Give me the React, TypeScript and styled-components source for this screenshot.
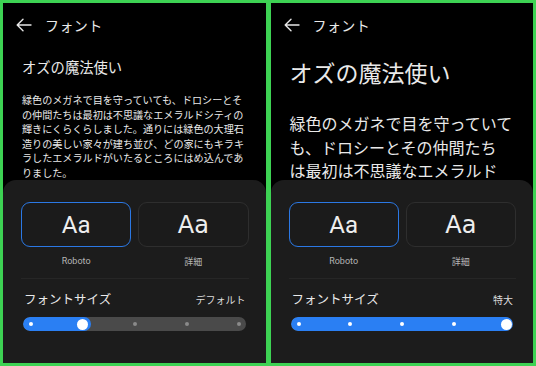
import styled, { createGlobalStyle } from "styled-components";

const GlobalStyle = createGlobalStyle`
  html, body {
    margin: 0;
    padding: 0;
    background: #3dd253;
  }
  * {
    box-sizing: border-box;
  }
`;

const Frame = styled.div`
  display: flex;
  gap: 5px;
  padding: 3px;
  width: 536px;
  height: 366px;
  background: #3dd253;
`;

const Phone = styled.div`
  flex: 1;
  display: flex;
  flex-direction: column;
  background: #000;
  overflow: hidden;
  font-family: "Noto Sans CJK JP", "Noto Sans", sans-serif;
  color: #e9e9e9;
`;

const Header = styled.div`
  display: flex;
  align-items: center;
  gap: 13px;
  height: 44px;
  padding-left: 13px;
  font-size: 14px;
  letter-spacing: 0.4px;
`;

const Preview = styled.div<{ $big: boolean }>`
  flex: 1;
  overflow: hidden;
  padding: ${(p) => (p.$big ? "9px 19px 0" : "10px 19px 0")};

  h1 {
    margin: 0;
    font-weight: 400;
    font-size: ${(p) => (p.$big ? "23px" : "14.3px")};
    line-height: ${(p) => (p.$big ? "32px" : "20px")};
  }

  p {
    margin: ${(p) => (p.$big ? "24px" : "16px")} 0 0;
    white-space: pre-line;
    font-size: ${(p) => (p.$big ? "16px" : "10.1px")};
    line-height: ${(p) => (p.$big ? "23.5px" : "14.5px")};
  }
`;

const Sheet = styled.div`
  height: 183px;
  flex-shrink: 0;
  background: #1c1c1c;
  border-radius: 13px 13px 0 0;
  padding: 22px 17px 0 18px;
`;

const Fonts = styled.div`
  display: grid;
  grid-template-columns: 1fr 1fr;
  gap: 7px;
  padding-bottom: 10px;
  border-bottom: 1px solid #262626;
`;

const FontOption = styled.div`
  display: flex;
  flex-direction: column;
  align-items: center;
`;

const FontCard = styled.div<{ $active: boolean; $face: string }>`
  width: 100%;
  height: 45px;
  display: flex;
  align-items: center;
  justify-content: center;
  border-radius: 9px;
  border: 1.5px solid ${(p) => (p.$active ? "#2b78e4" : "#2e2e2e")};
  background: #1b1b1b;
  font-family: ${(p) => p.$face};
  font-size: 24px;
  color: #eee;
`;

const FontLabel = styled.div<{ $face: string }>`
  margin-top: 8px;
  font-family: ${(p) => p.$face};
  font-size: 9px;
  line-height: 13px;
  color: #b5b5b5;
`;

const SizeRow = styled.div`
  display: flex;
  justify-content: space-between;
  align-items: center;
  margin-top: 12px;
  padding: 0 3px;

  span:first-child {
    font-size: 12.5px;
    line-height: 16px;
  }
  span:last-child {
    font-size: 10px;
    color: #ddd;
  }
`;

const Track = styled.div`
  position: relative;
  display: flex;
  justify-content: space-between;
  align-items: center;
  height: 14px;
  margin: 10px 3px 0 2px;
  padding: 0 7px 0 8px;
  border-radius: 7px;
  background: #4a4a4a;
  overflow: hidden;
`;

const Fill = styled.div`
  position: absolute;
  left: 0;
  top: 0;
  bottom: 0;
  border-radius: 7px;
  background: #2a7ff3;
`;

const Slot = styled.div`
  position: relative;
  width: 0;
  display: flex;
  justify-content: center;
`;

const Dot = styled.div<{ $on: boolean; $thumb: boolean }>`
  flex-shrink: 0;
  width: ${(p) => (p.$thumb ? "11px" : "4px")};
  height: ${(p) => (p.$thumb ? "11px" : "4px")};
  border-radius: 50%;
  background: ${(p) => (p.$thumb || p.$on ? "#fff" : "#8a8a8a")};
`;

const Back = () => (
  <svg width="16" height="14" viewBox="0 0 16 14" fill="none">
    <path
      d="M15 7H1.5M7 1.2L1.2 7 7 12.8"
      stroke="#e6e6e6"
      strokeWidth="1.4"
      strokeLinecap="round"
      strokeLinejoin="round"
    />
  </svg>
);

const smallText =
  "緑色のメガネで目を守っていても、ドロシーとそ\nの仲間たちは最初は不思議なエメラルドシティの\n輝きにくらくらしました。通りには緑色の大理石\n造りの美しい家々が建ち並び、どの家にもキラキ\nラしたエメラルドがいたるところにはめ込んであ\nりました。";
const bigText =
  "緑色のメガネで目を守っていて\nも、ドロシーとその仲間たち\nは最初は不思議なエメラルド\nシティの輝きにくらくらしました。";

const STEPS = 5;

function Screen({ level, big, sizeName }: { level: number; big: boolean; sizeName: string }) {
  const fill = level === STEPS - 1 ? "100%" : `${8 + level * 52 + 8}px`;
  return (
    <Phone>
      <Header>
        <Back />
        <span>フォント</span>
      </Header>
      <Preview $big={big}>
        <h1>オズの魔法使い</h1>
        <p>{big ? bigText : smallText}</p>
      </Preview>
      <Sheet>
        <Fonts>
          <FontOption>
            <FontCard $active $face="Roboto, sans-serif">
              Aa
            </FontCard>
            <FontLabel $face="Roboto, sans-serif">Roboto</FontLabel>
          </FontOption>
          <FontOption>
            <FontCard $active={false} $face="'DejaVu Sans', sans-serif">
              Aa
            </FontCard>
            <FontLabel $face="'Noto Sans CJK JP', sans-serif">詳細</FontLabel>
          </FontOption>
        </Fonts>
        <SizeRow>
          <span>フォントサイズ</span>
          <span>{sizeName}</span>
        </SizeRow>
        <Track>
          <Fill style={{ width: fill }} />
          {Array.from({ length: STEPS }).map((_, i) => (
            <Slot key={i}>
              <Dot $on={i <= level} $thumb={i === level} />
            </Slot>
          ))}
        </Track>
      </Sheet>
    </Phone>
  );
}

export default function App() {
  return (
    <>
      <GlobalStyle />
      <Frame>
        <Screen level={1} big={false} sizeName="デフォルト" />
        <Screen level={4} big sizeName="特大" />
      </Frame>
    </>
  );
}
